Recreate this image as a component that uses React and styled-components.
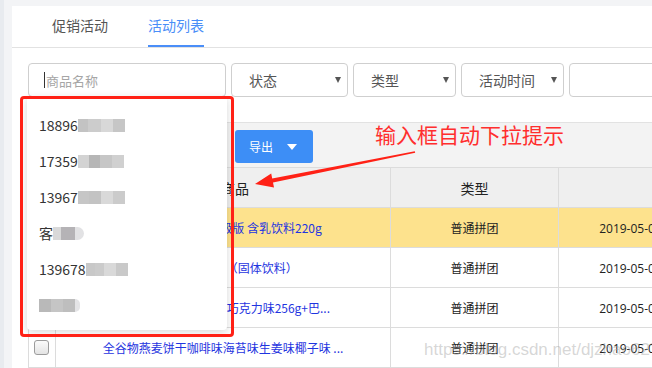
import React from 'react';
import styled, { createGlobalStyle } from 'styled-components';

const GlobalStyle = createGlobalStyle`
  html, body {
    margin: 0;
    padding: 0;
  }
  body {
    width: 652px;
    height: 368px;
    overflow: hidden;
    background: linear-gradient(to right, #e8ebef 0 4px, #f3f4f6 4px);
    font-family: "Noto Sans CJK SC", "Noto Sans", sans-serif;
  }
`;

const Page = styled.div`
  position: relative;
  width: 652px;
  height: 368px;
  padding: 6px 0 0 12px;
  box-sizing: border-box;
  overflow: hidden;
`;

const Card = styled.div`
  width: 900px;
  height: 362px;
  background: #fff;
`;

const TabBar = styled.div`
  display: flex;
  height: 42px;
  padding-left: 20px;
  box-sizing: border-box;
  border-bottom: 1px solid #e2e2e2;
`;

const Tab = styled.div`
  margin: 0 20px;
  height: 41px;
  line-height: 39px;
  box-sizing: border-box;
  font-size: 14px;
  color: ${p => (p.$active ? '#4a8ef8' : '#555')};
  border-bottom: 2px solid ${p => (p.$active ? '#4a8ef8' : 'transparent')};
`;

const FilterRow = styled.div`
  display: flex;
  gap: 5px;
  padding: 15px 0 0 16px;
`;

const Field = styled.div`
  position: relative;
  width: ${p => p.$w}px;
  height: 34px;
  flex: none;
`;

const TextBox = styled.div`
  height: 34px;
  box-sizing: border-box;
  border: 1px solid #cfcfcf;
  border-radius: 4px;
  display: flex;
  align-items: center;
  padding-left: 15px;
  font-size: 13px;
  color: #a6a6a6;
`;

const Cursor = styled.span`
  width: 1px;
  height: 16px;
  background: #333;
  margin-right: 1px;
`;

const SelectBox = styled.div`
  height: 34px;
  box-sizing: border-box;
  border: 1px solid #cfcfcf;
  border-radius: 4px;
  display: flex;
  align-items: center;
  justify-content: space-between;
  padding: 0 6px 0 17px;
  font-size: 14px;
  color: #555;
`;

const Caret = styled.span`
  width: 0;
  height: 0;
  border-left: ${p => p.$half || 3.5}px solid transparent;
  border-right: ${p => p.$half || 3.5}px solid transparent;
  border-top: 6px solid ${p => p.$color || '#555'};
`;

const Suggest = styled.div`
  position: absolute;
  top: 100%;
  left: -1px;
  width: 200px;
  padding: 10px 0 7px;
  background: #fff;
  border-radius: 0 0 4px 4px;
  box-shadow: 0 2px 9px rgba(0, 0, 0, 0.16);
  z-index: 5;
`;

const SuggestItem = styled.div`
  height: 36px;
  display: flex;
  align-items: center;
  padding-left: 12px;
  font-size: 14px;
  color: #333;
`;

const Blur = styled.span`
  display: inline-block;
  width: ${p => p.$w}px;
  height: 13px;
  background: ${p => p.$c};
  border-radius: ${p => (p.$round ? '0 7px 7px 0' : '0')};
`;

const TableWrap = styled.div`
  margin: 25px 0 0 16px;
  border-left: 1px solid #dcdcdc;
`;

const Toolbar = styled.div`
  display: flex;
  gap: 8px;
  padding: 7px 8px 4px;
  background: #f3f3f3;
  border-top: 1px solid #e2e2e2;
  border-bottom: 1px solid #dcdcdc;
`;

const Button = styled.div`
  height: 33px;
  width: ${p => (p.$w ? `${p.$w}px` : 'auto')};
  box-sizing: border-box;
  display: flex;
  align-items: center;
  gap: 14px;
  padding: 0 16px 0 14px;
  background: #3d8ef6;
  border-radius: 3px;
  color: #fff;
  font-size: 12px;
`;

const Row = styled.div`
  display: grid;
  grid-template-columns: 27px 335px 168px 326px;
  height: 40px;
  box-sizing: border-box;
  border-bottom: 1px solid #dcdcdc;
  background: ${p => p.$bg || '#fff'};
`;

const Cell = styled.div`
  display: flex;
  align-items: center;
  justify-content: center;
  border-right: 1px solid #dcdcdc;
  white-space: nowrap;
  overflow: hidden;
  font-family: ${p => (p.$num ? '"Open Sans", "Noto Sans CJK SC", sans-serif' : 'inherit')};
  font-size: ${p => (p.$head ? 14 : 12)}px;
  color: ${p => (p.$link ? '#1f35e0' : '#222')};
  padding-left: ${p => p.$pl || 0}px;
`;

const Check = styled.span`
  width: 13px;
  height: 13px;
  border: 1px solid #9c9c9c;
  border-radius: 3px;
  background: linear-gradient(#fbfbfb, #e4e4e4);
  margin-right: 2px;
`;

const Frame = styled.div`
  position: absolute;
  left: 20px;
  top: 96px;
  width: 214px;
  height: 241px;
  box-sizing: border-box;
  border: 3px solid #ff2116;
  border-radius: 4px;
  z-index: 6;
`;

const Arrow = styled.svg`
  position: absolute;
  left: 0;
  top: 0;
  z-index: 6;
  pointer-events: none;
`;

const Note = styled.div`
  position: absolute;
  left: 375px;
  top: 120px;
  font-size: 21px;
  line-height: 28px;
  color: #ff2e2e;
  z-index: 6;
`;

const Watermark = styled.div`
  position: absolute;
  left: 424px;
  top: 340px;
  font-family: "Liberation Sans", Arial, sans-serif;
  font-size: 17px;
  color: rgba(165, 165, 165, 0.45);
  white-space: nowrap;
  z-index: 7;
`;

const suggestions = [
  { text: '18896', blur: [[10, '#c3c3c3'], [13, '#cccccc'], [12, '#d8d8d8'], [12, '#c6c6c6']] },
  { text: '17359', blur: [[11, '#d3d3d3'], [11, '#b6b6b6'], [12, '#c6c6c6'], [12, '#d0d0d0']] },
  { text: '13967', blur: [[11, '#c6c6c6'], [12, '#c3c3c3'], [12, '#d9d9d9'], [12, '#cbcbcb']] },
  { text: '客', blur: [[8, '#d9d9d9'], [14, '#b5b3b6'], [9, '#e2e2e4', true]] },
  { text: '139678', blur: [[9, '#c8c8c8'], [9, '#cbcbcb'], [12, '#d9d9d9'], [12, '#c9c9c9']] },
  { text: '', blur: [[12, '#b9b9b9'], [12, '#c5c5c5'], [12, '#bebebe'], [5, '#e4e4e6', true]] },
];

const period = '2019-05-06 10:00:00 至 2019-05-13 10:00:00';

const rows = [
  { name: '早餐牛奶麦香味升级版 含乳饮料220g', type: '普通拼团', date: period, hl: true },
  { name: '雀巢咖啡 500g（固体饮料）', type: '普通拼团', date: period },
  { name: '德芙 榛仁丝滑牛奶黑巧克力味256g+巴...', type: '普通拼团', date: period },
  { name: '全谷物燕麦饼干咖啡味海苔味生姜味椰子味 ...', type: '普通拼团', date: period },
];

const selects = [
  { label: '状态', w: 117 },
  { label: '类型', w: 103 },
  { label: '活动时间', w: 103 },
];

export default function App() {
  return (
    <Page>
      <GlobalStyle />
      <Card>
        <TabBar>
          <Tab>促销活动</Tab>
          <Tab $active>活动列表</Tab>
        </TabBar>

        <FilterRow>
          <Field $w={198}>
            <TextBox>
              <Cursor />
              商品名称
            </TextBox>
            <Suggest>
              {suggestions.map((s, i) => (
                <SuggestItem key={i}>
                  {s.text}
                  {s.blur.map(([w, c, round], j) => (
                    <Blur key={j} $w={w} $c={c} $round={round} />
                  ))}
                </SuggestItem>
              ))}
            </Suggest>
          </Field>
          {selects.map(s => (
            <Field key={s.label} $w={s.w}>
              <SelectBox>
                {s.label}
                <Caret />
              </SelectBox>
            </Field>
          ))}
          <Field $w={200}>
            <SelectBox />
          </Field>
        </FilterRow>

        <TableWrap>
          <Toolbar>
            <Button $w={91}>新建活动</Button>
            <Button $w={91}>批量操作</Button>
            <Button>
              导出
              <Caret $color="#fff" $half={5.5} />
            </Button>
          </Toolbar>
          <Row $bg="#efefef">
            <Cell><Check /></Cell>
            <Cell $head $pl={24}>商品</Cell>
            <Cell $head>类型</Cell>
            <Cell $head>活动时间</Cell>
          </Row>
          {rows.map((r, i) => (
            <Row key={i} $bg={r.hl ? '#fde28d' : '#fff'}>
              <Cell><Check /></Cell>
              <Cell $link>{r.name}</Cell>
              <Cell>{r.type}</Cell>
              <Cell $num>{r.date}</Cell>
            </Row>
          ))}
        </TableWrap>
      </Card>

      <Frame />
      <Arrow width="652" height="368" viewBox="0 0 652 368">
        <polygon
          points="255,184 271.2,173.6 272.2,178.5 414.8,151.2 415.2,152.8 273,182.5 274,187.4"
          fill="#ff2116"
        />
      </Arrow>
      <Note>输入框自动下拉提示</Note>
      <Watermark>https://blog.csdn.net/djzhao627</Watermark>
    </Page>
  );
}
